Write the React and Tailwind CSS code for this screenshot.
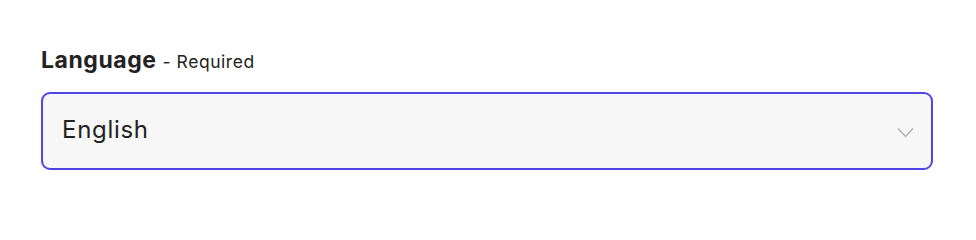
export default function App() {
  return (
    <div className="w-[976px] h-[217px] bg-white pt-[45px] pl-[41px] pr-[43px]" style={{ fontFamily: 'Inter, "Noto Sans", sans-serif' }}>
      <div className="flex items-baseline text-[#222222] h-[30px] leading-[30px]">
        <span className="text-[23px] font-bold tracking-[0.55px]">Language</span>
        <span className="text-[17.5px] ml-[6px] tracking-[0.55px]">- Required</span>
      </div>
      <div className="mt-[17px] h-[78px] rounded-[9px] border-2 border-[#4f46e5] bg-[#f7f7f7] flex items-center justify-between pl-[19px] pr-[17px]">
        <span className="text-[24px] text-[#222222] tracking-[0.7px] mb-[3px]">English</span>
        <svg width="17" height="11" viewBox="0 0 17 11" fill="none" className="mt-[2px]">
          <path d="M1 1.5 L8.5 9.5 L16 1.5" stroke="#b0b0b0" strokeWidth="1.3" />
        </svg>
      </div>
    </div>
  );
}
